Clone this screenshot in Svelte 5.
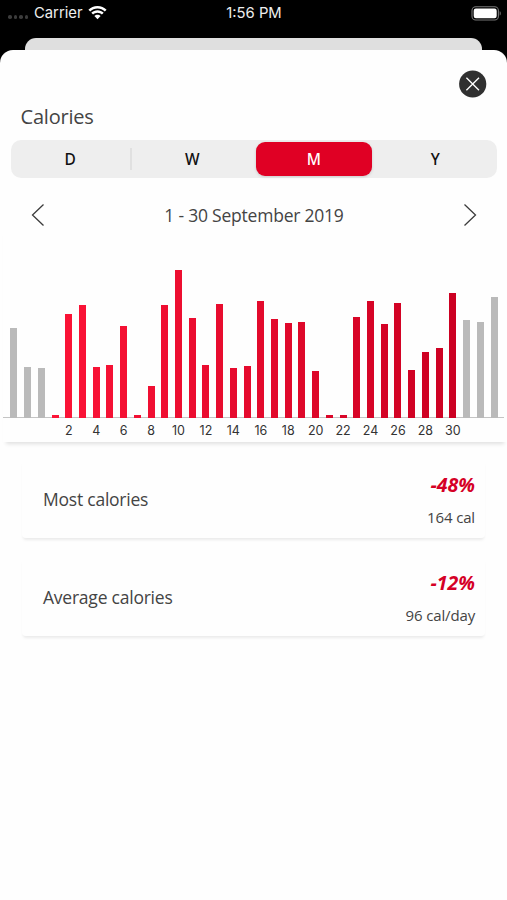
<script>
	const periods = ['D', 'W', 'M', 'Y'];
	let selected = 'M';

	const before = [90, 51.3, 49.7];
	const month = [
		3.2, 104, 113, 51.5, 53, 92, 3.2, 31.7, 113, 148, 100.2, 53.3, 114, 50, 52.5, 117.5, 99.3, 95,
		96, 47, 3.2, 3.2, 101, 117.5, 94, 114.7, 48, 66, 69.7, 125.5
	];
	const after = [98, 96.5, 121];

	const bars = [
		...before.map((height) => ({ height, color: '#bababa', label: '' })),
		...month.map((height, i) => ({
			height,
			color: shade(i / (month.length - 1)),
			label: i % 2 ? i + 1 : ''
		})),
		...after.map((height) => ({ height, color: '#bababa', label: '' }))
	];

	const stats = [
		{ name: 'Most calories', change: '-48%', value: '164 cal' },
		{ name: 'Average calories', change: '-12%', value: '96 cal/day' }
	];

	// bars go from a bright to a darker red through the month
	function shade(t) {
		const mix = (a, b) => Math.round(a + (b - a) * t);
		return `rgb(${mix(252, 204)}, ${mix(20, 0)}, ${mix(55, 34)})`;
	}
</script>

<div class="screen">
	<header class="status">
		<div class="network">
			<span class="dots"><i></i><i></i><i></i><i></i></span>
			<span class="carrier">Carrier</span>
			<svg class="wifi" width="19" height="14" viewBox="0 0 19 14" fill="#fff">
				<path d="M9.5 0C5.900 0 2.700 1.400.4 3.700L2.200 5.500C4.100 3.600 6.700 2.500 9.500 2.500s5.400 1.100 7.300 3l1.800-1.800C16.300 1.400 13.100 0 9.500 0z" />
				<path d="M9.500 4.300c-2.400 0-4.600 1-6.200 2.500l1.800 1.800c1.100-1.100 2.700-1.800 4.400-1.800s3.300.7 4.400 1.800l1.800-1.800c-1.600-1.500-3.800-2.500-6.200-2.500z" />
				<path d="M9.500 8.700c-1.200 0-2.300.5-3.100 1.200l3.100 3.300 3.100-3.300c-.8-.7-1.900-1.200-3.100-1.200z" />
			</svg>
		</div>
		<span class="time">1:56 PM</span>
		<svg class="battery" width="31" height="15" viewBox="0 0 31 15">
			<rect x="1" y=".8" width="26.400" height="13.200" rx="3.800" fill="none" stroke="#777" stroke-width="1.100" />
			<rect x="2.700" y="2.500" width="23" height="9.800" rx="2.200" fill="#fff" />
			<path d="M28.700 5.200c1.400.4 1.400 4 0 4.400z" fill="#777" />
		</svg>
	</header>
	<div class="behind"></div>

	<main class="sheet">
		<div class="close-row">
			<button class="close" aria-label="Close">
				<svg width="28" height="28" viewBox="0 0 28 28">
					<circle cx="13.700" cy="14" r="13.600" fill="#303030" />
					<path d="M7.400 7.700l12.600 12.600M20 7.700L7.400 20.300" stroke="#fff" stroke-width="1.300" />
				</svg>
			</button>
		</div>
		<h1>Calories</h1>

		<div class="segments">
			{#each periods as period}
				<button
					class="segment"
					class:active={period === selected}
					class:divided={period === 'D'}
					on:click={() => (selected = period)}
				>
					{period}
				</button>
			{/each}
		</div>

		<div class="range">
			<svg width="14" height="24" viewBox="0 0 14 24">
				<path d="M12.500 1.500L1.500 12l11 10.500" />
			</svg>
			<span>1 - 30 September 2019</span>
			<svg width="14" height="24" viewBox="0 0 14 24">
				<path d="M1.500 1.500L12.500 12l-11 10.500" />
			</svg>
		</div>

		<section class="chart">
			<div class="bars">
				{#each bars as bar}
					<div class="slot">
						<div class="bar" style="height: {bar.height}px; background: {bar.color}"></div>
					</div>
				{/each}
			</div>
			<div class="labels">
				{#each bars as bar}
					<div class="slot"><span>{bar.label}</span></div>
				{/each}
			</div>
		</section>

		<section class="stats">
			{#each stats as stat}
				<div class="card">
					<span class="name">{stat.name}</span>
					<div class="figures">
						<span class="change">{stat.change}</span>
						<span class="value">{stat.value}</span>
					</div>
				</div>
			{/each}
		</section>
	</main>
</div>

<style>
	:global(body) {
		margin: 0;
		background: #000;
	}
	.screen {
		display: flex;
		flex-direction: column;
		height: 900px;
		overflow: hidden;
		background: #000;
		color: #444;
		font-family: 'Open Sans', 'Noto Sans', sans-serif;
	}
	svg {
		display: block;
	}
	button {
		padding: 0;
		border: 0;
		background: none;
	}

	.status {
		display: grid;
		grid-template-columns: 1fr auto 1fr;
		align-items: center;
		box-sizing: border-box;
		height: 38px;
		padding: 0 5px 12px 6px;
		color: #eee;
		font-family: Inter, sans-serif;
		font-size: 14.800px;
		line-height: 26px;
	}
	.network {
		display: flex;
		align-items: center;
	}
	.dots {
		display: flex;
		gap: 2px;
		margin: 8px 6px 0 2px;
	}
	.dots i {
		width: 3.500px;
		height: 3.500px;
		border-radius: 50%;
		background: #3c3c3c;
	}
	.wifi {
		margin-left: 5px;
	}
	.battery {
		justify-self: end;
	}

	.behind {
		flex: none;
		height: 12px;
		margin: 0 25px;
		border-radius: 11px 11px 0 0;
		background: #dfdfdf;
	}
	.sheet {
		flex: 1;
		border-radius: 13px 13px 0 0;
		background: #fefefe;
	}
	.close-row {
		display: flex;
		justify-content: flex-end;
		padding: 20px 20px 0 0;
	}
	h1 {
		margin: 6px 0 0 20.500px;
		font-size: 20px;
		font-weight: 400;
		letter-spacing: -0.2px;
		line-height: 26px;
	}

	.segments {
		display: grid;
		grid-template-columns: repeat(4, 1fr);
		height: 38px;
		margin: 10px 10px 0 11px;
		border-radius: 10px;
		background: #eee;
	}
	.segment {
		margin: 2px 4px 3px 2px;
		border-radius: 9px;
		color: #111;
		font-family: 'Noto Sans', sans-serif;
		font-size: 15.500px;
		font-weight: 500;
	}
	.active {
		background: #e00024;
		color: #fff;
		box-shadow: 0 1px 3px rgba(0, 0, 0, 0.15);
	}
	.divided {
		margin: 8px 1px 9px 0;
		border-right: 2px solid #e0e0e0;
		border-radius: 0;
	}

	.range {
		display: flex;
		align-items: center;
		justify-content: space-between;
		height: 24px;
		margin: 25px 30px 0 31px;
		font-size: 17.500px;
		letter-spacing: -0.22px;
	}
	.range path {
		fill: none;
		stroke: #3c3c3c;
		stroke-width: 1.300;
	}

	.chart {
		height: 215px;
		margin-left: 3px;
		box-shadow: 0 5px 4px -3px rgba(0, 0, 0, 0.12);
	}
	.bars,
	.labels {
		display: flex;
		margin-right: 3px;
		padding: 0 3px 0 4px;
	}
	.bars {
		align-items: flex-end;
		box-sizing: border-box;
		height: 191px;
		border-bottom: 1px solid #c4c4c4;
	}
	.slot {
		display: flex;
		flex: 1 0 0;
		justify-content: center;
		width: 0;
		min-width: 0;
	}
	.bar {
		flex: none;
		width: 7px;
		margin-bottom: -1px;
	}
	.labels {
		padding-top: 5px;
		color: #333;
		font-family: Inter, sans-serif;
		font-size: 12.500px;
		line-height: 16px;
		white-space: nowrap;
	}

	.stats {
		display: flex;
		flex-direction: column;
		gap: 20px;
		padding: 18px 22px 0;
	}
	.card {
		display: flex;
		align-items: center;
		justify-content: space-between;
		box-sizing: border-box;
		height: 78px;
		padding: 0 10px 0 21px;
		border-radius: 4px;
		box-shadow: 0 3px 3px -1px rgba(0, 0, 0, 0.08);
	}
	.name {
		font-size: 17.500px;
		letter-spacing: -0.23px;
	}
	.figures {
		display: flex;
		flex-direction: column;
		align-items: flex-end;
		gap: 8px;
		padding-top: 4px;
	}
	.change {
		color: #d50026;
		font-size: 19.500px;
		font-style: italic;
		font-weight: 700;
		line-height: 24px;
	}
	.value {
		font-size: 15px;
		letter-spacing: -0.15px;
		line-height: 24px;
	}
</style>
